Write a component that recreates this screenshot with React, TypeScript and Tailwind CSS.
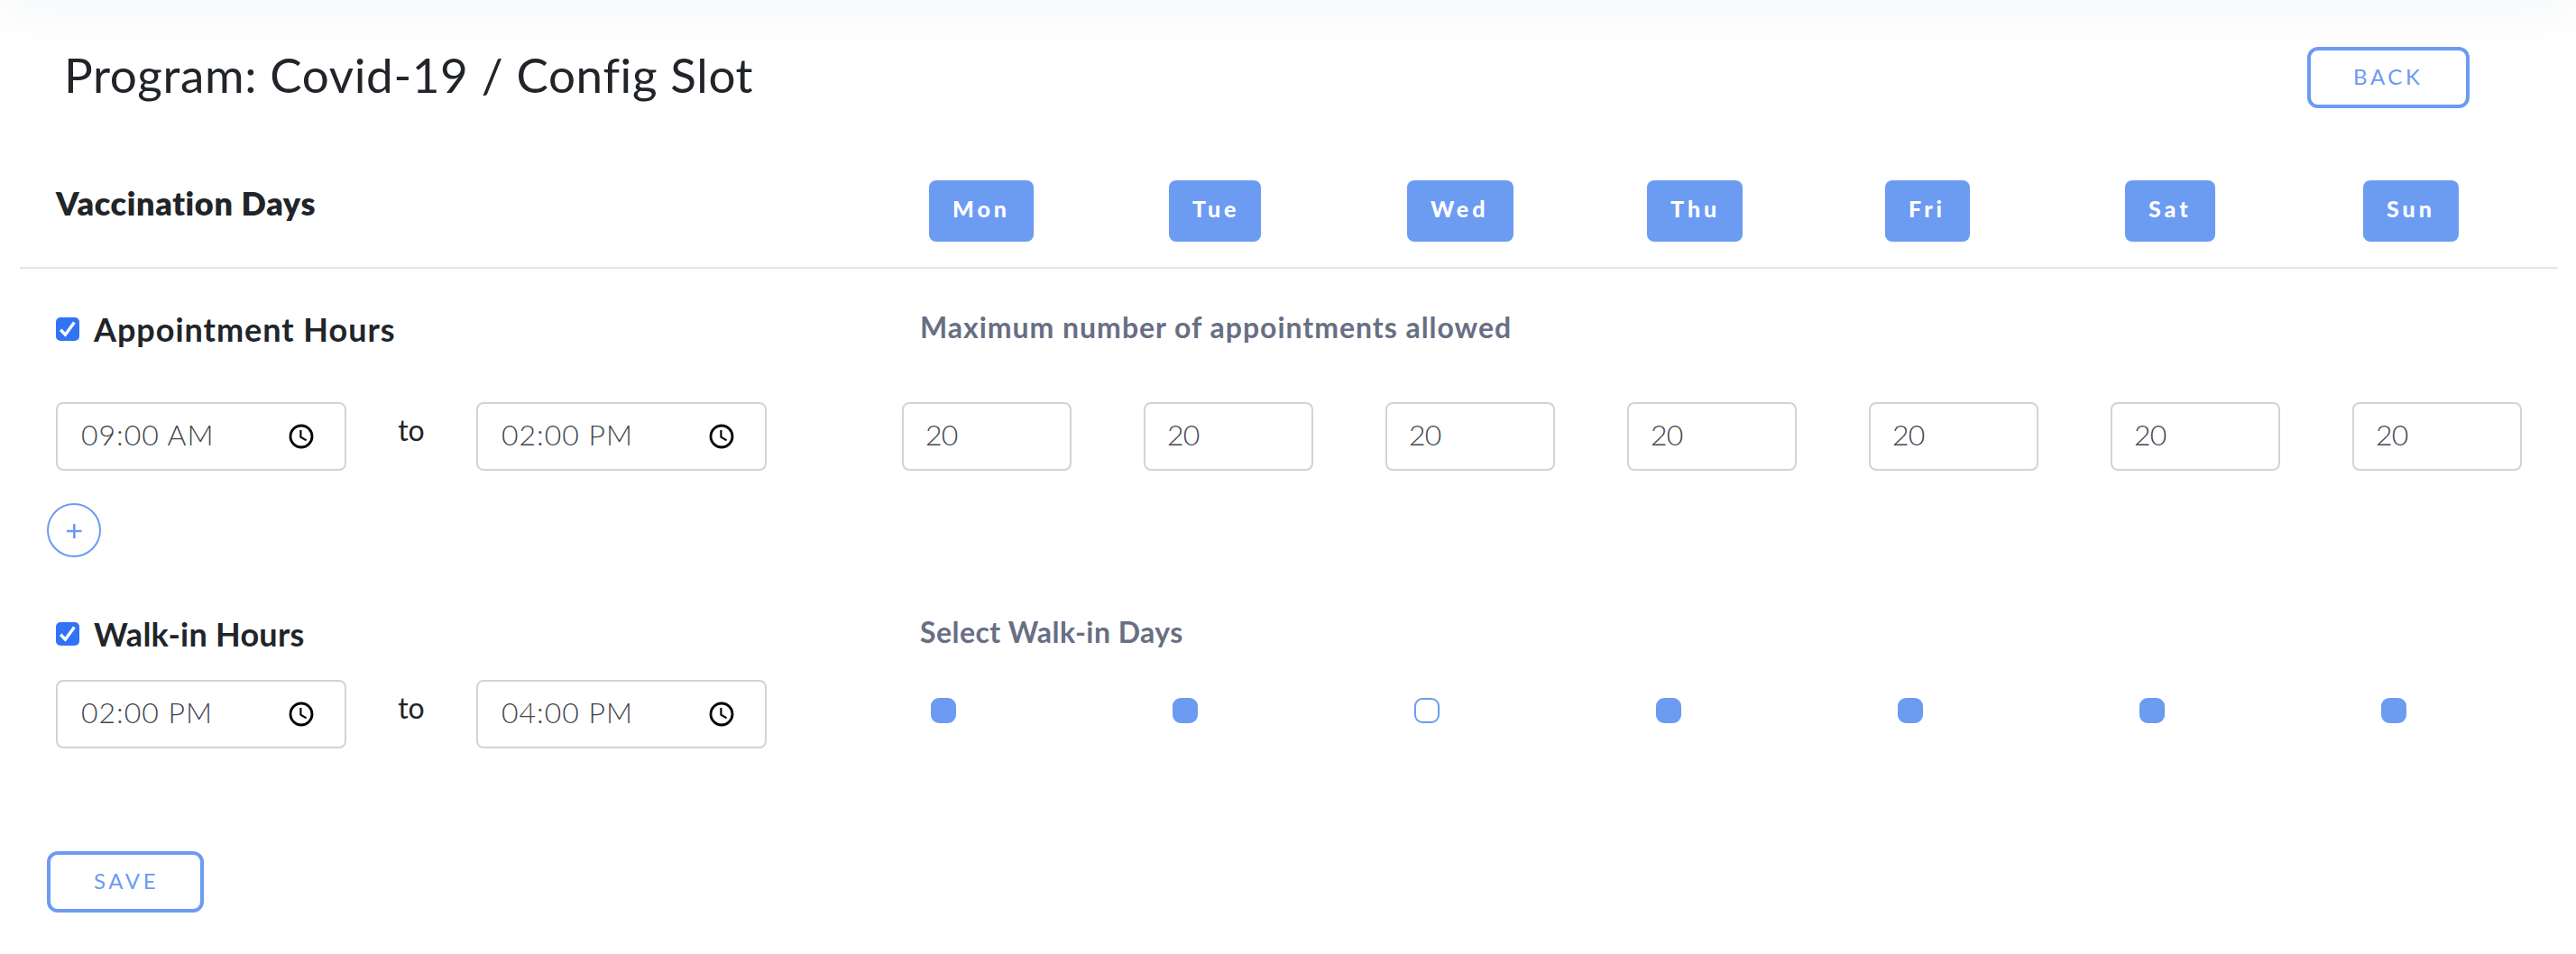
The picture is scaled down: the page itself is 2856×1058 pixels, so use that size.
const days = ['Mon', 'Tue', 'Wed', 'Thu', 'Fri', 'Sat', 'Sun'];
const dayWidths = ['w-[116px]', 'w-[102px]', 'w-[118px]', 'w-[106px]', 'w-[94px]', 'w-[100px]', 'w-[106px]'];
const walkInOff = ['Wed'];

function ClockIcon() {
  return (
    <svg className="size-7" viewBox="0 0 28 28" fill="none" stroke="#000">
      <circle cx="14" cy="14" r="12" strokeWidth="2.8" />
      <path d="M13.4 7v7.6l6.2 3.7" strokeWidth="2.1" />
    </svg>
  );
}

function TimeInput({ value }: { value: string }) {
  return (
    <div className="flex h-[76px] w-[322px] items-center justify-between rounded-lg border-2 border-[#ced4da] bg-white pr-[34px] pl-[26px]">
      <span className="pb-[5px] text-[32px] leading-9 font-light tracking-[1px] whitespace-nowrap text-[#3f464d]">{value}</span>
      <ClockIcon />
    </div>
  );
}

function TimeRange({ from, to }: { from: string; to: string }) {
  return (
    <div className="flex w-[938px] shrink-0">
      <TimeInput value={from} />
      <span className="flex h-[62px] w-[144px] items-center justify-center text-[32px] leading-9 text-[#212529]">to</span>
      <TimeInput value={to} />
    </div>
  );
}

function CheckLabel({ label, tracking }: { label: string; tracking: string }) {
  return (
    <label className="flex w-[958px] shrink-0 items-center gap-4">
      <span className="flex size-[26px] items-center justify-center rounded-[5px] bg-[#3273f6]">
        <svg className="size-[26px]" viewBox="0 0 26 26" fill="none" stroke="#fff" strokeWidth="3.4">
          <path d="M5.2 13.8l5.2 5.4L20.4 5.4" />
        </svg>
      </span>
      <span className={`text-[36px] leading-[26px] font-bold text-[#212529] ${tracking}`}>{label}</span>
    </label>
  );
}

function OutlineButton({ label, size }: { label: string; size: string }) {
  return (
    <button className={`flex h-[68px] items-center rounded-xl border-4 border-[#6c9bf2] pb-0.5 text-[24px] leading-7 tracking-[3.6px] text-[#6c9bf2] ${size}`}>
      {label}
    </button>
  );
}

export default function App() {
  return (
    <div className="relative h-[1058px] w-[2856px] overflow-hidden bg-white font-['Lato',sans-serif]">
      <div className="absolute inset-x-0 -top-20 h-20 shadow-[0_4px_64px_rgba(30,70,100,0.06)]" />

      <header className="flex h-[200px] items-start justify-between pt-[52px] pr-[118px] pl-[71px]">
        <h1 className="pt-px text-[53px] leading-[60px] tracking-[0.63px] text-[#212529]">Program: Covid-19 / Config Slot</h1>
        <OutlineButton label="BACK" size="w-[180px] pl-[47px]" />
      </header>

      <section className="mr-5 ml-[22px] flex h-[98px] border-b-2 border-[#e5e5e5] pl-10">
        <h2 className="w-[968px] shrink-0 pt-px text-[36px] leading-[48px] font-extrabold tracking-[0.65px] text-[#212529]">Vaccination Days</h2>
        <div className="grid grid-cols-[266px_264px_266px_264px_266px_264px_106px]">
          {days.map((day, i) => (
            <button key={day} className={`flex h-[68px] items-center rounded-lg bg-[#6c9bf2] pb-[7px] pl-[26px] text-[25px] leading-7 font-black tracking-[4px] text-white ${dayWidths[i]}`}>
              {day}
            </button>
          ))}
        </div>
      </section>

      <section className="pt-[54px] pl-[62px]">
        <div className="flex h-[26px]">
          <CheckLabel label="Appointment Hours" tracking="tracking-[0.97px]" />
          <h3 className="pt-px text-[32px] leading-5 font-bold tracking-[0.97px] text-[#686f84]">Maximum number of appointments allowed</h3>
        </div>
        <div className="mt-[68px] flex">
          <TimeRange from="09:00 AM" to="02:00 PM" />
          <div className="flex gap-20">
            {days.map((day) => (
              <div key={day} className="flex h-[76px] w-[188px] items-center rounded-lg border-2 border-[#ced4da] pb-[5px] pl-6 text-[32px] leading-9 font-light tracking-[-0.8px] text-[#3f464d]">
                20
              </div>
            ))}
          </div>
        </div>
        <button className="mt-9 -ml-2.5 flex size-[60px] items-center justify-center rounded-full border-2 border-[#6c9bf2]">
          <svg className="size-5" viewBox="0 0 20 20" stroke="#6c9bf2" strokeWidth="2.6">
            <path d="M10.3 3v16M2 11h16.6" />
          </svg>
        </button>
      </section>

      <section className="pt-[72px] pl-[62px]">
        <div className="flex h-[26px]">
          <CheckLabel label="Walk-in Hours" tracking="tracking-[0.25px]" />
          <h3 className="pt-px text-[32px] leading-5 font-bold tracking-[0.46px] text-[#686f84]">Select Walk-in Days</h3>
        </div>
        <div className="mt-[38px] flex">
          <TimeRange from="02:00 PM" to="04:00 PM" />
          <div className="flex gap-60 pt-5 pl-8">
            {days.map((day) => (
              <span key={day} className={`size-7 rounded-[9px] border-2 border-[#6c9bf2] ${walkInOff.includes(day) ? 'bg-white' : 'bg-[#6c9bf2]'}`} />
            ))}
          </div>
        </div>
      </section>

      <footer className="pt-[114px] pl-[52px]">
        <OutlineButton label="SAVE" size="w-[174px] pl-12" />
      </footer>
    </div>
  );
}
